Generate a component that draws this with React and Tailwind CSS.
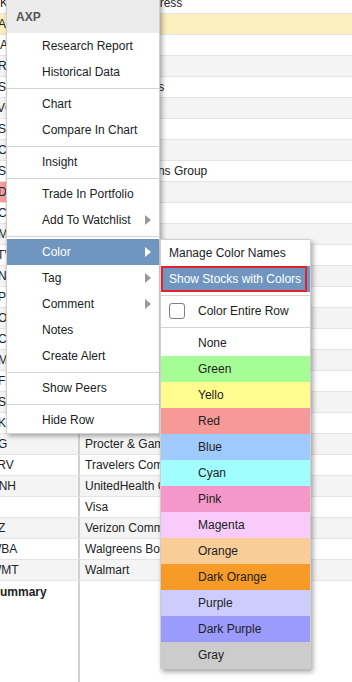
const rows = [
  ["MKC", "American Express"],
  ["AAPL", "Apple Inc."],
  ["MAR", "Marriott"],
  ["ARE", "Alexandria"],
  ["ASML", "Cisco Systems"],
  ["AVGO", "Broadcom"],
  ["ASYS", "Amsys"],
  ["ACN", "Accenture"],
  ["ASTE", "Travel Solutions Group"],
  ["ADBE", "Adobe"],
  ["ACIW", "ACI Corp"],
  ["AMGN", "Amgen"],
  ["ATVI", "Activision"],
  ["ANSS", "Ansys"],
  ["APD", "Air Products"],
  ["AON", "Aon"],
  ["ACGL", "Arch Capital"],
  ["AMT", "American Tower"],
  ["AFL", "Aflac"],
  ["ASO", "Academy"],
  ["AKR", "Acadia"],
  ["PG", "Procter & Gamble"],
  ["TRV", "Travelers Companies"],
  ["UNH", "UnitedHealth Group"],
  ["V", "Visa"],
  ["VZ", "Verizon Communications"],
  ["WBA", "Walgreens Boots Alliance"],
  ["WMT", "Walmart"],
];

const colors = [
  ["Green", "bg-[#a6fd95]"],
  ["Yello", "bg-[#fefc8f]"],
  ["Red", "bg-[#f69997]"],
  ["Blue", "bg-[#9ecafd]"],
  ["Cyan", "bg-[#a0fefe]"],
  ["Pink", "bg-[#f598c9]"],
  ["Magenta", "bg-[#f9cbfb]"],
  ["Orange", "bg-[#f9cd97]"],
  ["Dark Orange", "bg-[#f69a28]"],
  ["Purple", "bg-[#cccdfd]"],
  ["Dark Purple", "bg-[#9a9bfd]"],
  ["Gray", "bg-[#cccccc]"],
];

function Arrow({ white }) {
  return (
    <svg width="6" height="10" viewBox="0 0 6 10" className="absolute right-[8px] top-[8px]">
      <path d="M0 0 L6 5 L0 10 Z" fill={white ? "#ffffff" : "#9a9a9a"} />
    </svg>
  );
}

function Item({ label, arrow, active }) {
  return (
    <div className={`relative flex h-[26px] items-center pl-[35px] ${active ? "bg-[#7096c0] text-white" : "text-[#222]"}`}>
      {label}
      {arrow && <Arrow white={active} />}
    </div>
  );
}

function Sep() {
  return (
    <div className="flex h-[6px] items-center">
      <div className="h-px w-full bg-[#d4d4d4]" />
    </div>
  );
}

function Row({ k, sym, name }) {
  // k = -1 is the row cut at the top; k = 0 is the selected row
  let bg = k % 2 === 0 && k !== 0 ? "bg-[#f4f4f4]" : "bg-white";
  if (k === 0) bg = "bg-[#fbefbf]";
  const symBg = k === 8 ? "bg-[#f59c9c]" : "";
  return (
    <div className={`flex h-[21px] border-b border-[#e4e4e4] ${bg}`}>
      <div className={`flex w-[95px] shrink-0 items-center border-r-2 border-[#d0d0d0] pl-[5px] text-[#222] ${symBg}`}>{sym}</div>
      <div className="flex flex-1 items-center overflow-hidden whitespace-nowrap pl-[5px] text-[#222]">{name}</div>
    </div>
  );
}

export default function App() {
  return (
    <div className="relative h-[682px] w-[352px] overflow-hidden bg-white font-['Liberation_Sans',Arial,sans-serif] text-[12px]">
      <div className="-ml-[15px] -mt-[7px] flex h-[689px] w-[367px] flex-col">
        {rows.map(([sym, name], i) => (
          <Row key={sym} k={i - 1} sym={sym} name={name} />
        ))}
        <div className="flex h-[21px]">
          <div className="flex w-[95px] shrink-0 items-center border-r-2 border-[#d0d0d0] pl-[7px] font-bold text-[#222]">Summary</div>
          <div className="flex-1" />
        </div>
        <div className="flex flex-1">
          <div className="w-[95px] shrink-0 border-r-2 border-[#d0d0d0]" />
        </div>
      </div>

      {/* context menu */}
      <div className="absolute left-[6px] top-[-1px] w-[154px] border border-[#cfcfcf] bg-white shadow-[2px_2px_5px_rgba(0,0,0,0.35)]">
        <div className="flex h-[33px] items-center bg-[#ececec] pl-[9px] font-bold text-[#555]">AXP</div>
        <Item label="Research Report" />
        <Item label="Historical Data" />
        <Sep />
        <Item label="Chart" />
        <Item label="Compare In Chart" />
        <Sep />
        <Item label="Insight" />
        <Sep />
        <Item label="Trade In Portfolio" />
        <Item label="Add To Watchlist" arrow />
        <Sep />
        <Item label="Color" arrow active />
        <Item label="Tag" arrow />
        <Item label="Comment" arrow />
        <Item label="Notes" />
        <Item label="Create Alert" />
        <Sep />
        <Item label="Show Peers" />
        <Sep />
        <Item label="Hide Row" />
      </div>

      {/* color submenu */}
      <div className="absolute left-[160px] top-[239px] w-[151px] border border-[#cfcfcf] bg-white shadow-[2px_3px_5px_rgba(0,0,0,0.35)]">
        <div className="flex h-[26px] items-center pl-[8px] text-[#222]">Manage Color Names</div>
        <div className="relative flex h-[26px] items-center bg-[#7096c0] pl-[8px] text-white">
          Show Stocks with Colors
          <div className="absolute bottom-0 left-0 right-[3px] top-0 border-2 border-[#e3202b]" />
        </div>
        <Sep />
        <div className="flex h-[26px] items-center pl-[8px] text-[#222]">
          <div className="mr-[13px] h-[16px] w-[16px] rounded-[3px] border-[1.5px] border-[#808080]" />
          Color Entire Row
        </div>
        <Sep />
        <div className="flex h-[26px] items-center pl-[37px] text-[#222]">None</div>
        {colors.map(([label, cls]) => (
          <div key={label} className={`flex h-[26px] items-center pl-[37px] text-[#222] ${cls}`}>{label}</div>
        ))}
      </div>
    </div>
  );
}
